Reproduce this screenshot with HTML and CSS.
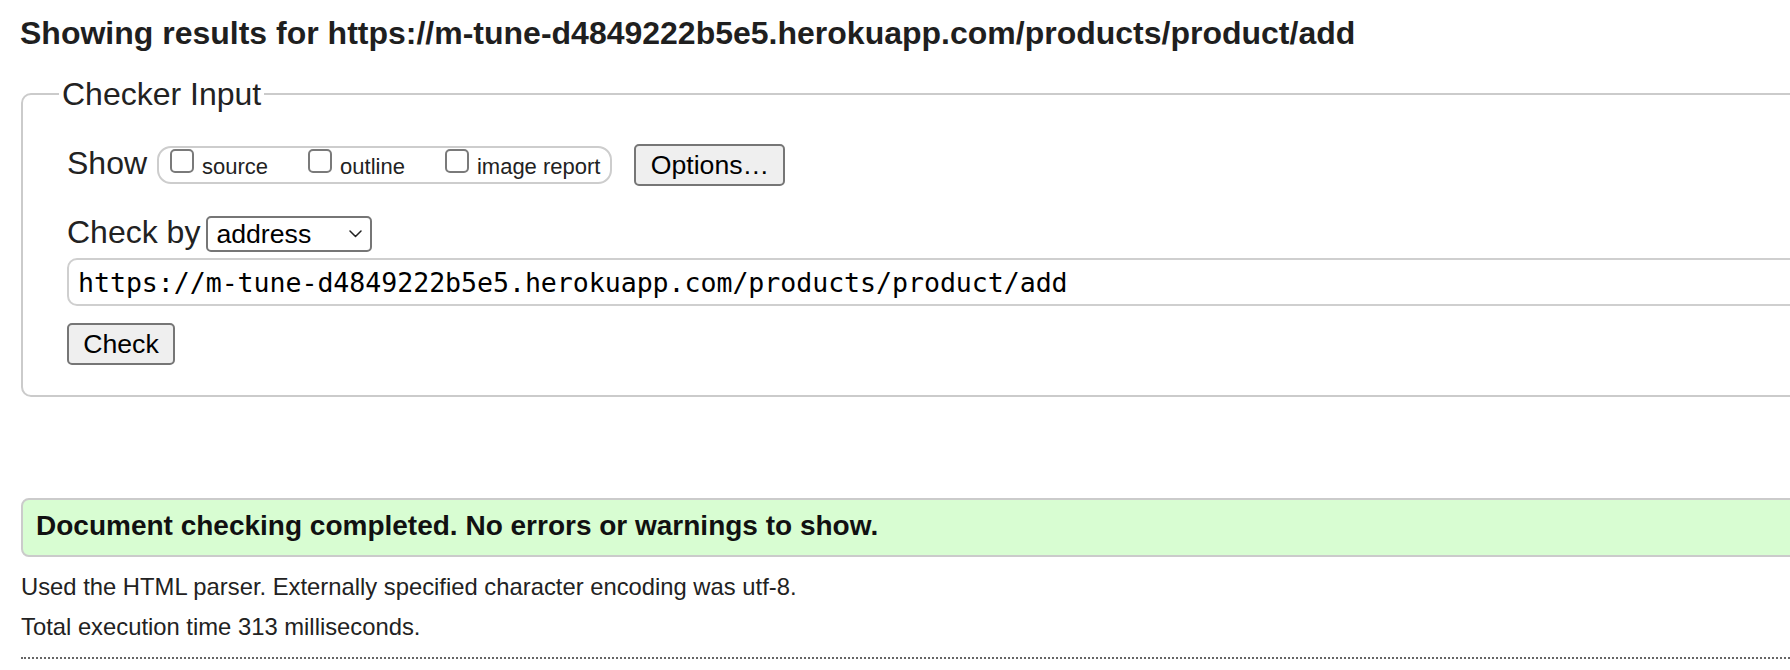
FILE: index.html
```html
<!DOCTYPE html>
<html lang="en">
<head>
<meta charset="utf-8">
<title>Showing results for https://m-tune-d4849222b5e5.herokuapp.com/products/product/add</title>
<link rel="stylesheet" href="styles.css">
</head>
<body>
<div class="page">
  <h1 class="title">Showing results for https://m-tune-d4849222b5e5.herokuapp.com/products/product/add</h1>

  <fieldset class="checker">
    <legend class="checker-legend">Checker Input</legend>

    <div class="row row-show">
      <span class="row-label label-show">Show</span>
      <div class="opts">
        <label class="opt"><input type="checkbox" class="cb"><span class="opt-text">source</span></label>
        <label class="opt"><input type="checkbox" class="cb"><span class="opt-text">outline</span></label>
        <label class="opt"><input type="checkbox" class="cb"><span class="opt-text">image report</span></label>
      </div>
      <button type="button" class="btn btn-options">Options…</button>
    </div>

    <div class="row row-by">
      <span class="row-label label-by">Check by</span>
      <div class="select-wrap">
        <select class="select"><option>address</option></select>
        <svg class="chevron" width="13" height="8" viewBox="0 0 13 8"><polyline points="1,1 6.5,6.5 12,1" fill="none" stroke="#222" stroke-width="1.5" stroke-linecap="round" stroke-linejoin="round"/></svg>
      </div>
    </div>

    <div class="row row-url">
      <input type="text" class="url" value="https://m-tune-d4849222b5e5.herokuapp.com/products/product/add">
    </div>

    <div class="row row-check">
      <button type="button" class="btn btn-check">Check</button>
    </div>
  </fieldset>

  <div class="success">Document checking completed. No errors or warnings to show.</div>

  <p class="info info-first">Used the HTML parser. Externally specified character encoding was utf-8.</p>
  <p class="info info-second">Total execution time 313 milliseconds.</p>
  <hr class="dotted">
</div>
</body>
</html>
```

FILE: styles.css
```css
html, body {
  margin: 0;
  padding: 0;
}

body {
  font-family: "Liberation Sans", Arial, Helvetica, sans-serif;
  color: #222;
  background: #fff;
  overflow: hidden;
}

.page {
  width: 2300px;
  padding: 15px 0 0 21px;
}

.title {
  margin: 0 0 0 -1px;
  font-size: 32px;
  line-height: 36px;
  font-weight: bold;
  color: #1f1f1f;
  white-space: nowrap;
}

.checker {
  margin: 25px 0 0 0;
  width: 2100px;
  border: 2px solid #cbcbcb;
  border-radius: 10px;
  padding: 0 0 30px 36px;
  box-sizing: border-box;
  min-width: 0;
}

.checker-legend {
  font-size: 32px;
  line-height: 36px;
  padding: 0 3px;
  color: #222;
}

.row {
  display: flex;
  align-items: center;
  padding-left: 8px;
}

.row-label {
  font-size: 32px;
  line-height: 36px;
  white-space: nowrap;
}

.row-show {
  margin-top: 32px;
  height: 42px;
}

.label-show {
  margin-bottom: 4px;
}

.opts {
  margin-left: 10px;
  height: 38px;
  box-sizing: border-box;
  border: 2px solid #cdcdcd;
  border-radius: 14px;
  padding: 0 10px 0 11px;
  display: flex;
  align-items: flex-start;
  gap: 40px;
}

.opt {
  display: flex;
  align-items: flex-start;
  font-size: 22px;
  line-height: 25px;
  white-space: nowrap;
}

.cb {
  appearance: none;
  -webkit-appearance: none;
  width: 24px;
  height: 24px;
  margin: 1px 8px 0 0;
  box-sizing: border-box;
  border: 2px solid #7a7a7a;
  border-radius: 5px;
  background: #fff;
}

.opt-text {
  margin-top: 6px;
}

.btn {
  font-family: "Liberation Sans", Arial, Helvetica, sans-serif;
  font-size: 26.67px;
  color: #000;
  background: #efefef;
  border: 2px solid #767676;
  border-radius: 5px;
  padding: 0;
  box-sizing: border-box;
  height: 42px;
}

.btn-options {
  margin-left: 22px;
  width: 151px;
}

.row-by {
  margin-top: 30px;
  height: 36px;
}

.label-by {
  margin-bottom: 5px;
}

.select-wrap {
  position: relative;
  margin-left: 6px;
  width: 166px;
  height: 36px;
}

.select {
  appearance: none;
  -webkit-appearance: none;
  width: 100%;
  height: 100%;
  box-sizing: border-box;
  border: 2px solid #767676;
  border-radius: 5px;
  background: #fff;
  color: #000;
  font-family: "Liberation Sans", Arial, Helvetica, sans-serif;
  font-size: 26.67px;
  padding: 0 0 0 8px;
  margin: 0;
}

.chevron {
  position: absolute;
  right: 10px;
  top: 14px;
  pointer-events: none;
}

.row-url {
  margin-top: 6px;
}

.url {
  width: 2000px;
  height: 48px;
  box-sizing: border-box;
  border: 2px solid #cfcfcf;
  border-radius: 10px;
  padding: 0 0 0 9px;
  margin: 0;
  font-family: "DejaVu Sans Mono", "Liberation Mono", monospace;
  font-size: 26.6px;
  letter-spacing: -0.05px;
  color: #000;
  background: #fff;
}

.row-check {
  margin-top: 17px;
}

.btn-check {
  width: 108px;
}

.success {
  margin-top: 101px;
  width: 2100px;
  height: 59px;
  box-sizing: border-box;
  border: 2px solid #cbcbcb;
  border-radius: 8px;
  background: #d8fdd2;
  display: flex;
  align-items: center;
  padding: 0 0 3px 13px;
  font-size: 28px;
  font-weight: bold;
  color: #111;
  white-space: nowrap;
}

.info {
  margin: 0;
  font-size: 23.8px;
  line-height: 28px;
  color: #222;
  white-space: nowrap;
}

.info-first {
  margin-top: 16px;
}

.info-second {
  margin-top: 12px;
}

.dotted {
  margin: 16px 0 0 0;
  width: 2100px;
  height: 0;
  border: 0;
  border-top: 2px dotted #666;
}
```
